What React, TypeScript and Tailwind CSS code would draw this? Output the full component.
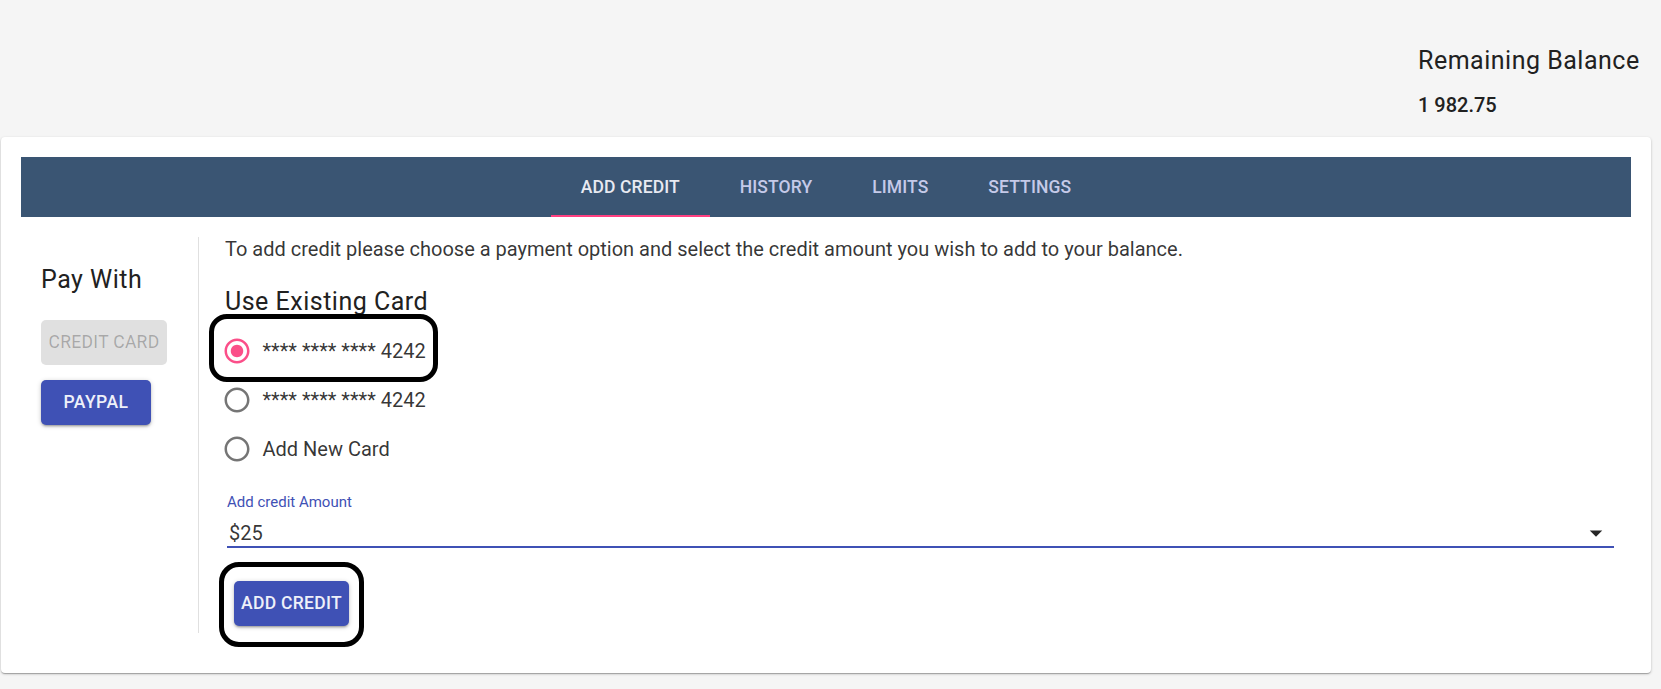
import React from "react";

function Radio({ checked }: { checked: boolean }) {
  return (
    <svg width="30" height="30" viewBox="0 0 24 24" className="ml-[-3.5px] shrink-0">
      <path
        fill={checked ? "#fb4f89" : "#757575"}
        d="M12 2C6.48 2 2 6.48 2 12s4.48 10 10 10 10-4.48 10-10S17.52 2 12 2zm0 18c-4.42 0-8-3.58-8-8s3.58-8 8-8 8 3.58 8 8-3.58 8-8 8z"
      />
      {checked && (
        <path
          fill="#fb4f89"
          d="M12 7c-2.76 0-5 2.24-5 5s2.24 5 5 5 5-2.24 5-5-2.24-5-5-5z"
        />
      )}
    </svg>
  );
}

function RadioRow({ label, checked }: { label: string; checked: boolean }) {
  return (
    <div className="flex h-[49px] items-center">
      <Radio checked={checked} />
      <span className="ml-[11px] text-[20px] leading-[24px] text-[rgba(0,0,0,0.8)]">{label}</span>
    </div>
  );
}

const tabs = ["Add Credit", "History", "Limits", "Settings"];

export default function App() {
  return (
    <div className="relative h-[689px] w-[1661px] overflow-hidden bg-[#f5f5f5] font-['Roboto',sans-serif]">
      {/* Header balance */}
      <div className="flex justify-end pt-[41px]">
        <div className="w-[243px]">
          <h6 className="text-[25px] font-normal leading-[40px] tracking-[0.5px] text-[#212121]">
            Remaining Balance
          </h6>
          <p className="mt-[8px] text-[20px] font-medium leading-[32px] text-[#212121]">1 982.75</p>
        </div>
      </div>

      {/* Card */}
      <div className="ml-[1px] mt-[16px] w-[1650px] rounded-[4px] bg-white p-5 pb-[40px] shadow-[0_1px_3px_rgba(0,0,0,0.2),0_1px_1px_rgba(0,0,0,0.14),0_2px_1px_-1px_rgba(0,0,0,0.12)]">
        {/* Tab bar */}
        <div className="flex h-[60px] justify-center bg-[#3a5573]">
          {tabs.map((t, i) => (
            <div
              key={t}
              className={
                "relative flex h-full items-center px-[30px] text-[17.5px] font-medium uppercase tracking-[0.1px] " +
                (i === 0 ? "text-[#e8eaf2]" : "text-[#c5cae9]")
              }
            >
              {t}
              {i === 0 && <span className="absolute bottom-0 left-0 h-[2.5px] w-full bg-[#ff4081]" />}
            </div>
          ))}
        </div>

        {/* Content */}
        <div className="mt-[20px] flex">
          {/* Left column */}
          <div className="w-[178px] shrink-0 border-r border-[#e0e0e0] pl-[20px] pt-[28px]">
            <h6 className="text-[25px] font-normal leading-[30px] tracking-[0.5px] text-[#212121]">Pay With</h6>
            <div className="mt-[25px] flex h-[45px] w-[126px] items-center justify-center whitespace-nowrap rounded-[5px] bg-[#e0e0e0] text-[17.5px] uppercase tracking-[0.3px] text-[rgba(0,0,0,0.26)]">
              Credit Card
            </div>
            <div className="mt-[15px] flex h-[45px] w-[110px] items-center justify-center rounded-[5px] bg-[#3f51b5] text-[17.5px] font-medium uppercase tracking-[0.5px] text-[#eef0f9] shadow-[0_1px_5px_rgba(0,0,0,0.2),0_2px_2px_rgba(0,0,0,0.14),0_3px_1px_-2px_rgba(0,0,0,0.12)]">
              Paypal
            </div>
          </div>

          {/* Right column */}
          <div className="flex-1 pb-[7px] pl-[26px] pr-[17px]">
            <p className="text-[20px] leading-[24px] text-[rgba(0,0,0,0.8)]">
              To add credit please choose a payment option and select the credit amount you wish to add to your balance.
            </p>
            <h6 className="mt-[26px] text-[25px] font-normal leading-[30px] tracking-[0.5px] text-[#212121]">
              Use Existing Card
            </h6>
            <div className="mt-[9px]">
              <RadioRow label="**** **** **** 4242" checked={true} />
              <RadioRow label="**** **** **** 4242" checked={false} />
              <RadioRow label="Add New Card" checked={false} />
            </div>

            {/* Select */}
            <div className="ml-[2px] mt-[20px]">
              <label className="block text-[15px] leading-[18px] text-[#3f51b5]">Add credit Amount</label>
              <div className="mt-[10px] border-b-2 border-[#3f51b5] pb-[1px]">
                <div className="flex h-[24px] items-center justify-between">
                  <span className="pl-[2px] text-[20px] leading-[24px] text-[rgba(0,0,0,0.8)]">$25</span>
                  <svg width="30" height="30" viewBox="0 0 24 24" className="-my-[3px] mr-[3px]">
                    <path d="M7 10l5 5 5-5z" fill="rgba(0,0,0,0.85)" />
                  </svg>
                </div>
              </div>
            </div>

            <div className="ml-[9px] mt-[33px] flex h-[45px] w-[115px] items-center justify-center whitespace-nowrap rounded-[5px] bg-[#3f51b5] text-[17.5px] font-medium uppercase tracking-[0.3px] text-[#eef0f9] shadow-[0_1px_5px_rgba(0,0,0,0.2),0_2px_2px_rgba(0,0,0,0.14),0_3px_1px_-2px_rgba(0,0,0,0.12)]">
              Add Credit
            </div>
          </div>
        </div>
      </div>

      {/* Hand-drawn annotations */}
      <div className="pointer-events-none absolute left-[209px] top-[314px] h-[68px] w-[229px] rounded-[18px] border-[5px] border-black" />
      <div className="pointer-events-none absolute left-[219px] top-[562px] h-[85px] w-[145px] rounded-[20px] border-[5px] border-black" />
    </div>
  );
}
